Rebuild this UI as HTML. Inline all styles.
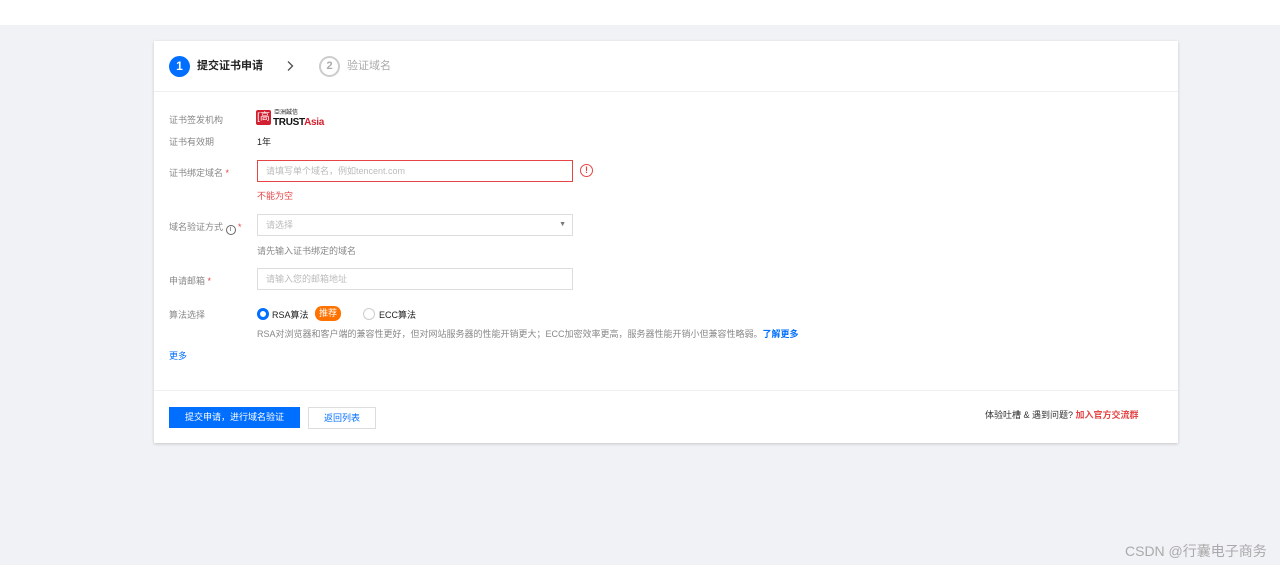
<!DOCTYPE html>
<html><head><meta charset="utf-8"><style>
*{margin:0;padding:0;box-sizing:border-box}
body{width:1280px;height:565px;background:#f1f2f6;font-family:"Liberation Sans","Noto Sans CJK SC",sans-serif;font-size:9px;line-height:11px;color:#333;position:relative;overflow:hidden}
.a{position:absolute;white-space:nowrap}
.top{position:absolute;left:0;top:0;width:1280px;height:25px;background:#fff}
.card{position:absolute;left:154px;top:41px;width:1024px;height:402px;background:#fff;box-shadow:0 1px 3px rgba(0,0,0,.18)}
.lbl{color:#888}
.inp{position:absolute;height:22px;border:1px solid #ddd;background:#fff;color:#bbb;padding-left:8px;line-height:20px;font-size:9px}
.req{color:#e54545}
</style></head><body>
<div class="top"></div>
<div class="card">
 <div class="a" style="left:15px;top:15px;width:21px;height:21px;border-radius:50%;background:#006eff;color:#fff;font-size:12px;font-weight:bold;text-align:center;line-height:21px">1</div>
 <div class="a" style="left:43px;top:19px;font-size:11px;line-height:13px;font-weight:bold;color:#222">提交证书申请</div>
 <svg class="a" style="left:131px;top:19px" width="10" height="12" viewBox="0 0 10 12"><path d="M3 1.5 L7.5 6 L3 10.5" fill="none" stroke="#555" stroke-width="1.4"/></svg>
 <div class="a" style="left:165px;top:15px;width:21px;height:21px;border-radius:50%;border:2px solid #ccc;color:#aaa;font-size:11px;text-align:center;line-height:17px;font-weight:bold">2</div>
 <div class="a" style="left:193px;top:19px;font-size:11px;line-height:13px;color:#aaa">验证域名</div>
 <div class="a" style="left:0;top:50px;width:1024px;height:1px;background:#eee"></div>

 <div class="a lbl" style="left:15px;top:74px">证书签发机构</div>
 <div class="a" style="left:102px;top:69px;width:15px;height:15px;background:#d32030;border-radius:2px;color:#fff;font-size:10px;text-align:center;line-height:15px">[高</div>
 <div class="a" style="left:120px;top:69px;font-size:6px;line-height:7px;color:#222">亞洲誠信</div>
 <div class="a" style="left:119px;top:76px;font-size:10px;line-height:11px;font-weight:bold;color:#111;letter-spacing:-.3px">TRUST<span style="color:#d32030">Asia</span></div>
 <div class="a lbl" style="left:15px;top:96px">证书有效期</div>
 <div class="a" style="left:103px;top:96px;color:#222">1年</div>

 <div class="a lbl" style="left:15px;top:127px">证书绑定域名 <span class="req">*</span></div>
 <div class="inp" style="left:103px;top:119px;width:316px;border-color:#e54545">请填写单个域名，例如tencent.com</div>
 <div class="a" style="left:426px;top:123px;width:13px;height:13px;border:1.5px solid #e54545;border-radius:50%;color:#e54545;font-size:9px;font-weight:bold;text-align:center;line-height:10px">!</div>
 <div class="a" style="left:103px;top:150px;color:#e54545">不能为空</div>

 <div class="a lbl" style="left:15px;top:181px">域名验证方式 <span style="display:inline-block;width:10px;height:10px;border:1px solid #666;border-radius:50%;font-size:7px;text-align:center;line-height:8px;color:#555;vertical-align:-1px">i</span> <span class="req">*</span></div>
 <div class="inp" style="left:103px;top:173px;width:316px">请选择<span style="position:absolute;right:6px;top:0;color:#777;font-size:7px">▼</span></div>
 <div class="a lbl" style="left:103px;top:205px">请先输入证书绑定的域名</div>

 <div class="a lbl" style="left:15px;top:235px">申请邮箱 <span class="req">*</span></div>
 <div class="inp" style="left:103px;top:227px;width:316px">请输入您的邮箱地址</div>

 <div class="a lbl" style="left:15px;top:269px">算法选择</div>
 <div class="a" style="left:103px;top:267px;width:12px;height:12px;border:3px solid #006eff;border-radius:50%"></div>
 <div class="a" style="left:118px;top:269px;color:#222">RSA算法</div>
 <div class="a" style="left:161px;top:265px;width:26px;height:15px;background:#ff7200;border-radius:7px;color:#fff;text-align:center;line-height:15px">推荐</div>
 <div class="a" style="left:209px;top:267px;width:12px;height:12px;border:1px solid #ccc;border-radius:50%"></div>
 <div class="a" style="left:225px;top:269px;color:#222">ECC算法</div>
 <div class="a lbl" style="left:103px;top:288px">RSA对浏览器和客户端的兼容性更好，但对网站服务器的性能开销更大；ECC加密效率更高，服务器性能开销小但兼容性略弱。<span style="color:#006eff;font-weight:bold">了解更多</span></div>
 <div class="a" style="left:15px;top:310px;color:#006eff">更多</div>

 <div class="a" style="left:0;top:349px;width:1024px;height:1px;background:#f0f0f0"></div>
 <div class="a" style="left:15px;top:366px;width:131px;height:21px;background:#006eff;color:#fff;text-align:center;line-height:21px">提交申请，进行域名验证</div>
 <div class="a" style="left:154px;top:366px;width:68px;height:22px;border:1px solid #ddd;color:#006eff;text-align:center;line-height:20px">返回列表</div>
 <div class="a" style="left:831px;top:369px;color:#333">体验吐槽 &amp; 遇到问题? <span style="color:#e54545;font-weight:bold">加入官方交流群</span></div>
</div>
<div class="a" style="left:1125px;top:543px;font-size:14px;line-height:16px;color:#aaa">CSDN @行囊电子商务</div>
</body></html>
